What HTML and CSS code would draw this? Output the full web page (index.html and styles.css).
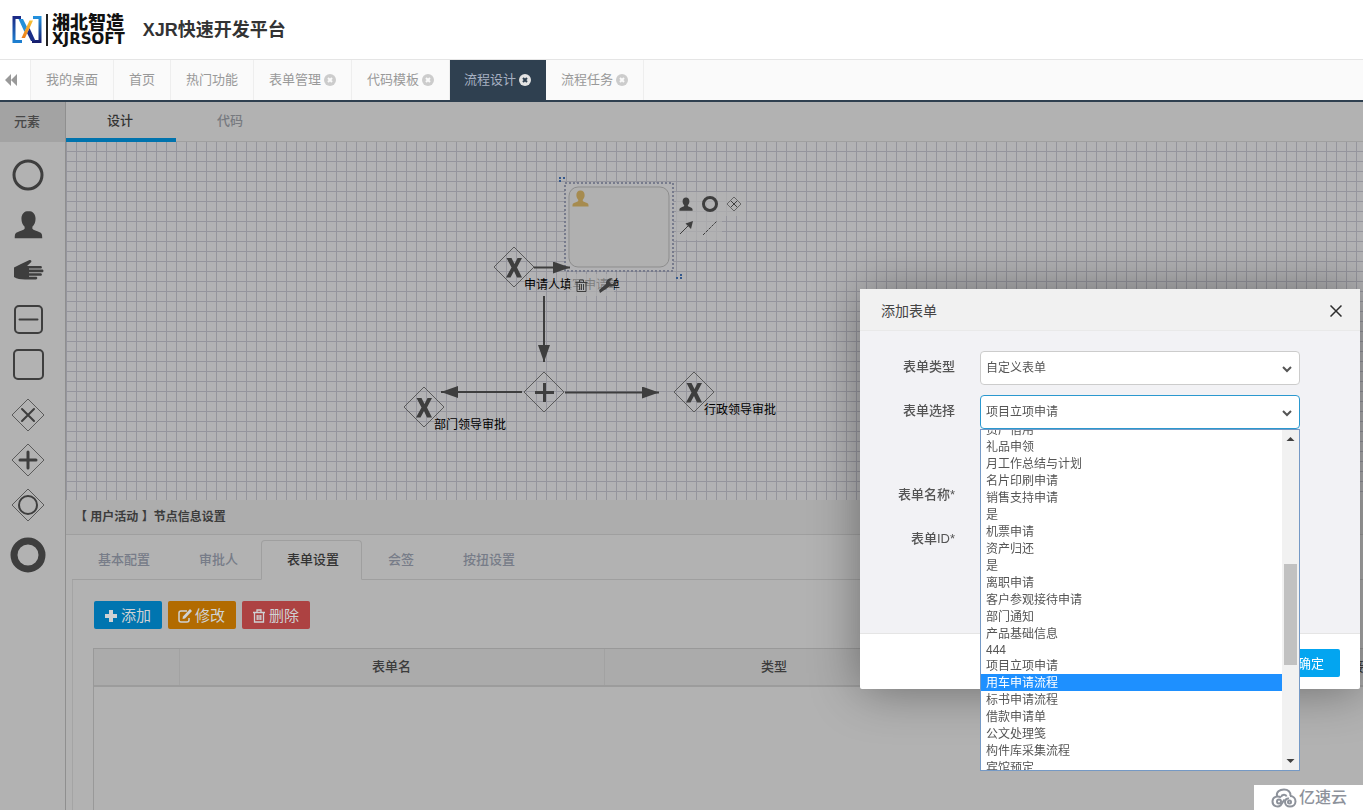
FILE: index.html
```html
<!DOCTYPE html>
<html lang="zh-CN">
<head>
<meta charset="utf-8">
<title>XJR快速开发平台</title>
<link rel="stylesheet" href="styles.css">
</head>
<body>
<svg class="defs" aria-hidden="true">
  <defs>
    <linearGradient id="lg-left" x1="0" y1="0" x2="0" y2="1"><stop offset="0" stop-color="#1c2a86"/><stop offset="1" stop-color="#1d7fd0"/></linearGradient>
    <linearGradient id="lg-right" x1="0" y1="0" x2="0" y2="1"><stop offset="0" stop-color="#2390dd"/><stop offset="1" stop-color="#171f6e"/></linearGradient>
    <linearGradient id="lg-slash" x1="0" y1="0" x2="0" y2="1"><stop offset="0" stop-color="#f6c234"/><stop offset="1" stop-color="#ee7d1b"/></linearGradient>
    <symbol id="i-user" viewBox="0 0 30 30"><path d="M15 1c-4.500 0-7.300 3.400-7.300 8 0 3.600 1.400 6.500 3.300 8.300v2.200c-1 1.400-4.500 2.300-7.500 3.500C1.300 24 .8 25 .8 29.300h28.400c0-4.300-.5-5.300-2.700-6.300-3-1.200-6.500-2.100-7.500-3.500v-2.200c1.900-1.800 3.300-4.700 3.300-8.300 0-4.600-2.800-8-7.300-8z"/></symbol>
    <symbol id="i-close" viewBox="0 0 12 12"><circle cx="6" cy="6" r="6"/><path class="cross" d="M4 4l4 4M8 4l-4 4"/></symbol>
    <symbol id="i-gate-x" viewBox="-21 -21 42 42"><path class="thin" d="M0-20L20 0 0 20-20 0z"/><path class="solid" d="M-7.500-9h5L.5-3 3.500-9h4.500L3 .5 8 10.500H3L0 4-3.500 10.500H-8L-2.500.5z"/></symbol>
    <marker id="tip" viewBox="0 0 17 12" refX="17" refY="6" markerWidth="17" markerHeight="12" markerUnits="userSpaceOnUse" orient="auto"><path d="M0 0l17 6-17 6z" fill="#3e3e3e"/></marker>
    <pattern id="grid" width="10" height="10" patternUnits="userSpaceOnUse"><path d="M0 9.500h10M.5 0v10" stroke="#95959d" fill="none"/></pattern>
  </defs>
</svg>

<header class="brand">
  <svg class="brand-mark" viewBox="0 0 30 27" aria-hidden="true">
    <path d="M9 1.500H2v24h8" fill="none" stroke="url(#lg-left)" stroke-width="3"/>
    <path d="M21 1.500h7v24h-8" fill="none" stroke="url(#lg-right)" stroke-width="3"/>
    <path d="M6.500 3h4.500l4 8-2.500 5z" fill="#238fd9"/>
    <path d="M23.500 25h-4.500l-4-8 2.500-5z" fill="#1a2d86"/>
    <path d="M17.500 4.500h3.500L13 22H9.500z" fill="url(#lg-slash)"/>
  </svg>
  <div class="brand-name"><span class="brand-cn">湘北智造</span><span class="brand-en">XJRSOFT</span></div>
  <h1 class="title">XJR快速开发平台</h1>
</header>

<nav class="pages" aria-label="页面">
  <button class="pages-back" aria-label="向左"><svg width="12" height="12" viewBox="0 0 12 12"><path d="M6 0v12L0 6zM12 0v12L6 6z" fill="#999"/></svg></button>
  <a class="page" href="#">我的桌面</a>
  <a class="page" href="#">首页</a>
  <a class="page" href="#">热门功能</a>
  <a class="page" href="#">表单管理<svg class="x"><use href="#i-close"/></svg></a>
  <a class="page" href="#">代码模板<svg class="x"><use href="#i-close"/></svg></a>
  <a class="page is-active" href="#">流程设计<svg class="x"><use href="#i-close"/></svg></a>
  <a class="page" href="#">流程任务<svg class="x"><use href="#i-close"/></svg></a>
</nav>

<div class="workspace">
  <aside class="palette">
    <h2 class="palette-title">元素</h2>
    <div class="tools">
      <div class="tool-group">
        <button class="tool" aria-label="开始"><svg viewBox="0 0 36 36"><circle class="line" cx="18" cy="18" r="14"/></svg></button>
      </div>
      <div class="tool-group">
        <button class="tool" aria-label="用户活动"><svg viewBox="0 0 36 36"><use href="#i-user" x="4" y="3" width="29" height="29"/></svg></button>
        <button class="tool" aria-label="手工活动"><svg viewBox="0 0 36 36"><path d="M4 15.500L11 12l8-3.800c2.300-.9 3.300 1.500 1.500 2.600L17 14h13.500c1.900 0 1.900 2.600 0 2.600H19v.9h13c2 0 2 2.800 0 2.800H19v.9h11.500c1.900 0 1.900 2.600 0 2.600H19v.9h7c1.700 0 1.700 2.700 0 2.700H15c-4.500 0-8-.7-11-2.500z"/></svg></button>
      </div>
      <div class="tool-group">
        <button class="tool" aria-label="子流程"><svg viewBox="0 0 36 36"><rect class="box" x="5" y="4" width="27" height="27" rx="4"/><path class="box" d="M9.500 17.500h18"/></svg></button>
        <button class="tool" aria-label="活动"><svg viewBox="0 0 36 36"><rect class="box" x="4" y="3" width="29" height="29" rx="4"/></svg></button>
      </div>
      <div class="tool-group">
        <button class="tool" aria-label="排他网关"><svg viewBox="0 0 36 36"><path class="thin" d="M18 2l16 16-16 16L2 18z"/><path class="mark" d="M12 12l12 12M24 12L12 24"/></svg></button>
        <button class="tool" aria-label="并行网关"><svg viewBox="0 0 36 36"><path class="thin" d="M18 2l16 16-16 16L2 18z"/><path class="line" d="M10 18h16M18 10v16"/></svg></button>
        <button class="tool" aria-label="包容网关"><svg viewBox="0 0 36 36"><path class="thin" d="M18 2l16 16-16 16L2 18z"/><circle class="ring" cx="18" cy="18" r="9"/></svg></button>
      </div>
      <div class="tool-group">
        <button class="tool" aria-label="结束"><svg viewBox="0 0 36 36"><circle class="heavy" cx="18" cy="18" r="14"/></svg></button>
      </div>
    </div>
  </aside>

  <main class="designer">
    <div class="modes">
      <button class="mode is-active">设计</button>
      <button class="mode">代码</button>
    </div>

    <svg class="canvas" role="img" aria-label="流程图">
      <rect width="100%" height="100%" fill="url(#grid)"/>
      <g transform="translate(-66 -142)">
        <rect class="selection" x="565" y="183" width="108" height="88"/>
        <rect class="task" x="569" y="187" width="100" height="80" rx="9"/>
        <use href="#i-user" x="572" y="190" width="17" height="17" fill="#a68b4f"/>
        <path class="grip" d="M559 178h2M563 178h2M559 181h2M676 278h2M680 278h2M680 275h2"/>
        <use href="#i-gate-x" x="493" y="246" width="42" height="42"/>
        <use href="#i-gate-x" x="403" y="386" width="42" height="42"/>
        <use href="#i-gate-x" x="673" y="371" width="42" height="42"/>
        <path class="thin" d="M544 372l20 20-20 20-20-20z"/>
        <path class="plus" d="M535 392.500h19M544.500 383v19"/>
        <path class="flow" d="M534 267.500H570"/>
        <path class="flow" d="M544 296V362"/>
        <path class="flow" d="M522 392H441"/>
        <path class="flow" d="M565 392.500H659"/>
        <text class="node-label" x="524" y="289">申请人填写申请单</text>
        <text class="node-label" x="704" y="414">行政领导审批</text>
        <text class="node-label" x="434" y="429">部门领导审批</text>
        <path class="pad" d="M676 192h70v24h-24v24h-46zM570 274h44v22h-44z"/>
        <g fill="none" stroke="#3e3e3e">
          <path d="M575.500 282.500h12M579.500 282v-2h4v2M577 283v8.500h9V283M579.500 284v6M581.500 284v6M583.500 284v6"/>
          <circle cx="710" cy="204" r="6.500" stroke-width="3"/>
          <path d="M734 197l7 7-7 7-7-7z" stroke="#666"/>
          <path d="M731 201l6 6M737 201l-6 6"/>
          <path d="M680 234l9-9"/>
          <path d="M703 235l14-14" stroke-dasharray="3 1"/>
        </g>
        <path d="M600 293l-1-3 7-6c-.5-4 3-6.500 6.500-5.500l-3 3 1 2 2 .5 4-3.500c1 4-3 7-7 6z" fill="#3e3e3e"/>
        <path d="M693 221l-2 8-5.500-5.500z" fill="#3e3e3e"/>
        <use href="#i-user" x="679" y="197" width="14" height="14" fill="#3e3e3e"/>
      </g>
    </svg>

    <section class="props">
      <h2 class="props-title">【 用户活动 】节点信息设置</h2>
      <div class="prop-tabs">
        <button class="prop-tab">基本配置</button>
        <button class="prop-tab">审批人</button>
        <button class="prop-tab is-active">表单设置</button>
        <button class="prop-tab">会签</button>
        <button class="prop-tab">按扭设置</button>
      </div>
      <div class="prop-body">
        <div class="actions">
          <button class="action add"><svg viewBox="0 0 14 14"><path d="M5 1h4v4h4v4H9v4H5V9H1V5h4z"/></svg>添加</button>
          <button class="action edit"><svg viewBox="0 0 14 14"><path d="M9 2H3Q1 2 1 4v7q0 2 2 2h6q2 0 2-2V9" fill="none" stroke="currentColor" stroke-width="1.500"/><path d="M12 0l2 2-7 7.500L4.500 10 5 7.500z"/></svg>修改</button>
          <button class="action remove"><svg viewBox="0 0 14 14"><path d="M1 3.500h12M5 3V1h4v2M2.500 4v9h9V4M5.200 6v5M7 6v5M8.800 6v5" fill="none" stroke="currentColor" stroke-width="1.300"/></svg>删除</button>
        </div>
        <div class="grid-box">
          <table class="forms">
            <thead><tr><th class="col-no"></th><th class="col-name">表单名</th><th class="col-type">类型</th><th class="col-link">链接地址</th></tr></thead>
          </table>
        </div>
      </div>
    </section>
  </main>
</div>

<div class="dialog" role="dialog" aria-labelledby="dlg-title">
  <div class="dialog-head">
    <h2 class="dialog-title" id="dlg-title">添加表单</h2>
    <button class="dialog-close" aria-label="关闭"><svg width="12" height="12" viewBox="0 0 12 12"><path d="M.5.5l11 11M11.500.5l-11 11" stroke="#2d2d2d" stroke-width="1.500"/></svg></button>
  </div>
  <form class="dialog-body">
    <div class="field">
      <label for="f-type">表单类型</label>
      <div class="control">
        <select id="f-type"><option>自定义表单</option></select>
        <svg class="chevron" viewBox="0 0 10 7"><path d="M1 1l4 4 4-4"/></svg>
      </div>
    </div>
    <div class="field">
      <label for="f-form">表单选择</label>
      <div class="control is-open">
        <select id="f-form"><option>项目立项申请</option></select>
        <svg class="chevron" viewBox="0 0 10 7"><path d="M1 1l4 4 4-4"/></svg>
        <div class="popup">
          <ul class="options" role="listbox" aria-label="表单选择">
            <li class="cut-top" role="option">资产借用</li>
            <li role="option">礼品申领</li>
            <li role="option">月工作总结与计划</li>
            <li role="option">名片印刷申请</li>
            <li role="option">销售支持申请</li>
            <li role="option">是</li>
            <li role="option">机票申请</li>
            <li role="option">资产归还</li>
            <li role="option">是</li>
            <li role="option">离职申请</li>
            <li role="option">客户参观接待申请</li>
            <li role="option">部门通知</li>
            <li role="option">产品基础信息</li>
            <li class="latin" role="option">444</li>
            <li role="option">项目立项申请</li>
            <li class="is-hover" role="option" aria-selected="true">用车申请流程</li>
            <li role="option">标书申请流程</li>
            <li role="option">借款申请单</li>
            <li role="option">公文处理笺</li>
            <li role="option">构件库采集流程</li>
            <li role="option">宾馆预定</li>
          </ul>
          <div class="scroll" aria-hidden="true">
            <svg class="scroll-arrow" viewBox="0 0 17 17"><path d="M4.500 11l4-4 4 4z"/></svg>
            <div class="scroll-before"></div>
            <div class="scroll-thumb"></div>
            <div class="scroll-after"></div>
            <svg class="scroll-arrow" viewBox="0 0 17 17"><path d="M4.500 6l4 4 4-4z"/></svg>
          </div>
        </div>
      </div>
    </div>
    <div class="field is-spaced">
      <label for="f-name">表单名称*</label>
      <div class="control"><input id="f-name" type="text"></div>
    </div>
    <div class="field">
      <label for="f-id">表单ID*</label>
      <div class="control"><input id="f-id" type="text"></div>
    </div>
  </form>
  <div class="dialog-foot"><button class="ok">确定</button></div>
</div>

<div class="watermark">
  <svg viewBox="0 0 26 20" aria-hidden="true"><g fill="none" stroke="#8d929b" stroke-width="2"><path d="M6 8.500C5 4 8.500 1.500 13 1.500c4 0 7 2.500 6.500 6.500"/><path d="M13.500 11.500L9.500 17.500C7 19.500 1.500 18.500 1.500 13.500S7 7.500 10 9.500"/><path d="M19 8c3.500 0 5.500 2.500 5.500 5.500s-2.500 5-5.500 5-5-2-5-4.500 2-4 4-3.500"/><circle cx="8" cy="13.500" r="2"/><circle cx="18.500" cy="14" r="1.500"/><path d="M10 9c1-3 5-3 5.500-.5"/></g></svg>
  <span>亿速云</span>
</div>
</body>
</html>
```
FILE: styles.css
```css
* { box-sizing: border-box; }

html, body { height: 100%; }

body {
  margin: 0;
  display: flex;
  flex-direction: column;
  overflow: hidden;
  background: #b2b2b2;
  color: #3c3c3c;
  font: 13px/20px "Liberation Sans", "Noto Sans CJK SC", sans-serif;
}

h1, h2, ul { margin: 0; padding: 0; }
ul { list-style: none; }

button, input, select {
  margin: 0;
  padding: 0;
  border: 0;
  background: none;
  color: inherit;
  font: inherit;
}

a { color: inherit; text-decoration: none; }
svg { display: block; }

.defs { position: absolute; width: 0; height: 0; }

/* Brand */
.brand {
  flex: none;
  display: flex;
  align-items: center;
  height: 59px;
  padding-left: 12px;
  background: #fff;
}
.brand-mark { width: 30px; height: 27px; }
.brand-name {
  display: flex;
  flex-direction: column;
  margin: 0 18px 0 4px;
  padding-left: 4px;
  border-left: 2px solid #222;
  color: #111;
}
.brand-cn { font-size: 18px; font-weight: 900; line-height: 18px; }
.brand-en { font: bold 15px/14px "DejaVu Sans", sans-serif; }
.title { color: #333; font-size: 18px; font-weight: 700; }

/* Page tabs */
.pages {
  flex: none;
  display: flex;
  height: 43px;
  border-top: 1px solid #e5e5e5;
  border-bottom: 2px solid #2f4050;
  background: #fafafa;
  color: #999;
}
.pages-back {
  display: flex;
  align-items: center;
  justify-content: center;
  width: 31px;
  padding-right: 8px;
  border-right: 1px solid #eee;
  background: #fff;
}
.page {
  display: flex;
  align-items: center;
  gap: 3px;
  padding: 0 15px;
  border-right: 1px solid #eee;
}
.x { width: 12px; height: 12px; fill: #ccc; --mark: #fafafa; }
.cross { stroke: var(--mark); stroke-width: 2; }
.page.is-active { padding: 0 14px; border-color: #2f4050; background: #2f4050; color: #a7b1c2; }
.is-active .x { fill: #e4e4e4; --mark: #2f4050; }

/* Workspace */
.workspace { flex: 1; display: flex; min-height: 0; }

.palette {
  flex: none;
  width: 66px;
  border-right: 1px solid #8f8f8f;
}
.palette-title {
  height: 40px;
  padding-left: 14px;
  background: #a3a3a3;
  color: #484848;
  font-size: 13px;
  font-weight: 500;
  line-height: 40px;
}
.tools { display: flex; flex-direction: column; gap: 5px; padding-top: 10px; }
.tool { display: block; width: 56px; height: 45px; padding: 4px 10px; }
.tool svg { width: 36px; height: 36px; fill: #3e3e3e; }
.line { fill: none; stroke: #3e3e3e; stroke-width: 3; stroke-linecap: round; }
.mark { fill: none; stroke: #3e3e3e; stroke-width: 2; stroke-linecap: round; }
.box { fill: none; stroke: #3e3e3e; stroke-width: 2; stroke-linecap: round; }
.thin { fill: none; stroke: #5a5a5a; stroke-width: 1; }
.ring { fill: none; stroke: #3e3e3e; stroke-width: 2; }
.heavy { fill: none; stroke: #3e3e3e; stroke-width: 7; }
.solid { fill: #3e3e3e; }

.designer { flex: 1; display: flex; flex-direction: column; min-width: 0; }

.modes { flex: none; display: flex; height: 40px; border-bottom: 1px solid #a0a0a0; }
.mode {
  width: 110px;
  height: 40px;
  padding: 2px 2px 0 0;
  border-bottom: 4px solid transparent;
  color: #777a80;
  font-weight: 500;
}
.mode.is-active { border-color: #0073ad; color: #333; }

.canvas { flex: none; width: 100%; height: 358px; background: #b2b2b4; }
.task { fill: #b0b0b0; stroke: #8d8d8d; }
.selection { fill: #b2b2b4; stroke: #777b8c; stroke-width: 2; stroke-dasharray: 2 2; }
.grip { stroke: #34588c; stroke-width: 2; }
.plus { stroke: #3e3e3e; stroke-width: 3; }
.flow { fill: none; stroke: #3e3e3e; stroke-width: 2; marker-end: url(#tip); }
.node-label { fill: #000; font-size: 12px; }
.pad { fill: #b2b2b2; fill-opacity: .7; }

/* Node properties */
.props { flex: 1; display: flex; flex-direction: column; min-height: 0; }
.props-title {
  flex: none;
  height: 35px;
  padding-left: 9px;
  border-bottom: 1px solid #9f9f9f;
  background: #adadad;
  font-size: 12px;
  font-weight: 700;
  line-height: 34px;
}
.prop-tabs {
  flex: none;
  display: flex;
  margin: 5px 0 0 6px;
  border-bottom: 1px solid #9f9f9f;
}
.prop-tab {
  height: 40px;
  margin-bottom: -1px;
  padding: 0 22px 0 25px;
  border: 1px solid transparent;
  border-radius: 4px 4px 0 0;
  color: #777c88;
  font-weight: 500;
}
.prop-tab.is-active {
  border-color: #9f9f9f;
  border-bottom-color: #b2b2b2;
  background: #b2b2b2;
  color: #333;
}
.prop-body {
  flex: 1;
  display: flex;
  flex-direction: column;
  gap: 19px;
  min-height: 0;
  margin-left: 6px;
  padding: 21px 0 0 20px;
  border-left: 1px solid #a4a4a4;
}
.actions { display: flex; gap: 6px; padding-left: 1px; }
.action {
  display: flex;
  align-items: center;
  gap: 3px;
  height: 28px;
  padding: 1px 11px 0 10px;
  border-radius: 2px;
  color: #cfd2d4;
  font-size: 15px;
}
.action svg { width: 14px; height: 14px; fill: currentColor; }
.add { background: #0075b0; }
.edit { background: #b26b00; }
.remove { background: #ad4242; }

.grid-box {
  flex: 1;
  overflow: hidden;
  border-top: 1px solid #999;
  border-left: 1px solid #999;
}
.forms { width: 1690px; table-layout: fixed; border-collapse: collapse; }
.forms th {
  height: 37px;
  padding: 0 0 1px;
  border-right: 1px solid #a2a2a2;
  border-bottom: 2px solid #9c9c9c;
  background: #ababab;
  font-weight: 500;
}
.forms .col-no { width: 85px; }
.forms .col-name { width: 425px; }
.forms .col-type { width: 340px; }

/* Dialog */
.dialog {
  position: fixed;
  top: 289px;
  right: 3px;
  width: 500px;
  border-radius: 2px;
  background: #fff;
  box-shadow: 1px 1px 50px rgba(0, 0, 0, .4);
  color: #555;
}
.dialog-head {
  display: flex;
  align-items: center;
  justify-content: space-between;
  height: 42px;
  padding: 2px 18px 0 21px;
  border-bottom: 1px solid #e9e9e9;
  background: #f1f1f1;
}
.dialog-title { color: #444; font-size: 14px; font-weight: 400; }
.dialog-body {
  display: flex;
  flex-direction: column;
  gap: 10px;
  height: 303px;
  padding: 20px 60px 0 20px;
  border-bottom: 1px solid #e5e5e5;
  background: #f2f2f5;
}
.field { display: flex; gap: 25px; }
.field label { width: 75px; font-weight: 500; line-height: 31px; text-align: right; }
.is-spaced { margin-top: 40px; }
.control { position: relative; flex: 1; }
.control select, .control input {
  display: block;
  width: 100%;
  height: 34px;
  padding: 0 5px;
  border: 1px solid #ccc;
  border-radius: 4px;
  background: #fff;
  color: #555;
  font-size: 12px;
  appearance: none;
}
.control.is-open select { border-color: #2b98cf; }
.chevron { position: absolute; top: 15px; right: 8px; width: 10px; height: 7px; fill: none; stroke: #555; stroke-width: 2; }

.popup {
  position: absolute;
  z-index: 2;
  top: 100%;
  left: 0;
  right: 0;
  display: flex;
  height: 342px;
  border: 1px solid #7599c5;
  background: #fff;
}
.options { flex: 1; overflow: hidden; font-size: 12px; line-height: 16px; }
.options li { height: 17px; padding: 1px 0 0 5px; }
.options .cut-top { display: flex; align-items: flex-end; height: 8px; overflow: hidden; }
.options .latin { height: 15px; line-height: 14px; }
.options .is-hover { background: #1e90ff; color: #fff; }
.scroll { display: flex; flex-direction: column; width: 17px; background: #f1f1f1; }
.scroll-arrow { flex: none; width: 17px; height: 17px; fill: #404040; }
.scroll-before { flex: 117; }
.scroll-thumb { flex: 101; margin: 0 2px; background: #c1c1c1; }
.scroll-after { flex: 88; }

.dialog-foot { display: flex; justify-content: flex-end; padding: 15px 20px 12px; }
.ok { height: 28px; padding: 2px 16px 0; border-radius: 2px; background: #03a5f0; color: #fff; }

.watermark {
  position: fixed;
  right: 0;
  bottom: 0;
  display: flex;
  align-items: center;
  gap: 2px;
  height: 25px;
  padding: 0 16px 0 17px;
  background: #fff;
  color: #8d929b;
  font-size: 16px;
  font-weight: 500;
}
.watermark svg { width: 26px; height: 20px; }
```
